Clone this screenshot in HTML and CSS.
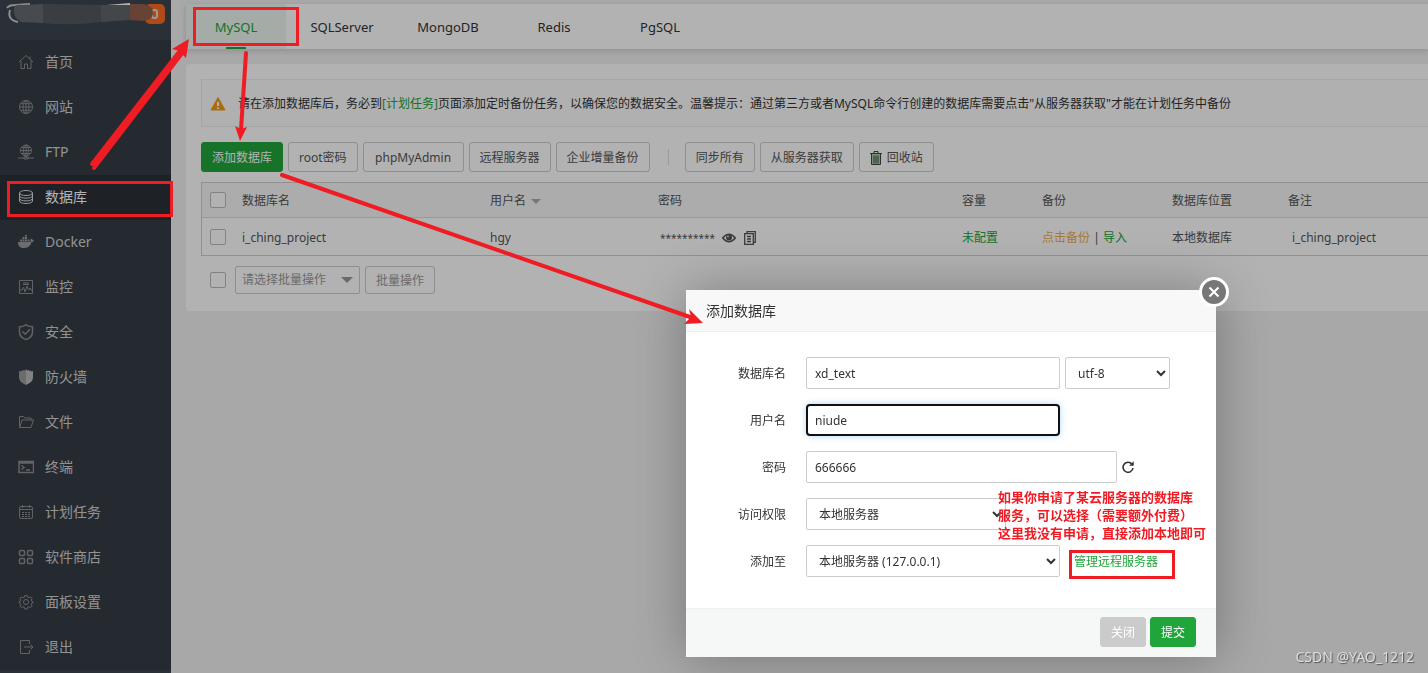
FILE: index.html
```html
<!DOCTYPE html>
<html lang="zh-CN">
<head>
<meta charset="utf-8">
<meta name="viewport" content="width=device-width, initial-scale=1">
<title>数据库</title>
<link rel="stylesheet" href="styles.css">
</head>
<body>
<div class="app">
  <aside class="sidebar">
    <div class="brand">
      <svg class="brand-art" viewBox="0 0 171 40" aria-hidden="true">
        <rect x="145" y="4" width="20" height="20" rx="5" fill="#fa6c20"/>
        <path d="M7 8Q9 5 15 5L30 4M10 10Q7 20 18 22" fill="none" stroke="#cacaca" stroke-width="2"/>
        <rect x="152" y="10" width="5" height="8" rx="2" fill="none" stroke="#ddd" stroke-width="2"/>
        <path d="M14 8Q15 4 22 5L43 4V23L21 22Q12 17 14 8Z" fill="#666a70"/>
        <path d="M43 4L101 5V22Q71 26 43 23Z" fill="#545a5f"/>
        <path d="M101 5L130 4V20L101 22Z" fill="#62666b"/>
        <path d="M130 4H144Q154 6 153 14Q152 20 143 21L130 20Z" fill="#94614c"/>
        <path d="M107 5L130 3V5Z" fill="#fff"/>
      </svg>
    </div>
    <nav class="menu">
      <a href="#"><svg viewBox="0 0 16 16"><path d="M1 8 8 1.500 15 8M3 7v7.500h3.500V10h3v4.500H13V7M12 5V2.500"/></svg>首页</a>
      <a href="#"><svg viewBox="0 0 16 16"><circle cx="8" cy="8" r="6.500"/><ellipse cx="8" cy="8" rx="3" ry="6.500"/><path d="M8 1.500v13M1.500 8h13M2.500 4.700h11M2.500 11.300h11"/></svg>网站</a>
      <a href="#"><svg viewBox="0 0 16 16"><circle cx="8" cy="6.500" r="5.500"/><ellipse cx="8" cy="6.500" rx="2.500" ry="5.500"/><path d="M8 1v13M2.500 6.500h11M3.500 3.500h9M3.500 9.500h9M0 14h6M10 14h6M6 13h4v2H6z"/></svg>FTP</a>
      <a href="#" class="active" aria-current="page"><svg viewBox="0 0 16 16"><ellipse cx="8" cy="4" rx="6.500" ry="2.500"/><path d="M1.500 4v8c0 3.300 13 3.300 13 0V4M1.500 6.700c0 3.300 13 3.300 13 0M1.500 9.400c0 3.300 13 3.300 13 0"/></svg>数据库</a>
      <a href="#"><svg viewBox="0 0 16 16"><path class="solid" d="M0 8h11.500c1.300 0 1.200-1 .8-2 .4-.7.900-1.200 1.300-1.500.8.500 1 1.200 1 1.700.6-.1 1.100 0 1.500.3-.4 1-1.300 1.500-2.500 1.500C12.500 12 10 14 6 14 2 14 0 12 0 8zM2 5.500h2v2H2zm2.500 0h2v2h-2zm2.500 0h2v2H7zm2.500 0h2v2h-2zm-5-2.500h2v2h-2zM7 3h2v2H7zM7 1h2v1.500H7z"/></svg>Docker</a>
      <a href="#"><svg viewBox="0 0 16 16"><path d="M1.500 1.500h13v13h-13zM5 4h6M5 5.500h6M2 11h2l1.500-3L7 13l2-6 1.500 4 1.500-2 1 2h1.500"/></svg>监控</a>
      <a href="#"><svg viewBox="0 0 16 16"><path class="bold" d="M8 .8Q11 2.800 14.500 2.800V8c0 4-3 6.300-6.500 7.600C4.500 14.300 1.500 12 1.500 8V2.800Q5 2.800 8 .8zM4.500 7.500 7.200 10.200 12 5.300"/></svg>安全</a>
      <a href="#"><svg viewBox="0 0 16 16"><path fill="#9b9b9b" stroke="none" d="M8 0v16C4 14 1 12.500 1 8V2l2 .5V1.500L5 2V1l2 .5z"/><path fill="#bbb" stroke="none" d="M8 0v16c4-2 7-3.500 7-8V2l-2 .5V1.500L11 2V1L9 1.500z"/></svg>防火墙</a>
      <a href="#"><svg viewBox="0 0 16 16"><path d="M1.500 13.500v-11h4L7 4h6v2M1.500 13.500 4 6h11.500L13 13.500z"/></svg>文件</a>
      <a href="#"><svg viewBox="0 0 16 16"><path class="bold" d="M1 2.500h14.500v11H1zM1 4h14.500M3.500 6.500 6 8.500 3.500 10.500M8 11h4"/></svg>终端</a>
      <a href="#"><svg viewBox="0 0 16 16"><rect x="1.500" y="2.500" width="13" height="12" rx="1.500"/><path d="M1.500 5.500h13M4.500 1v3M11.500 1v3M4 8.500h2M7 8.500h2M10 8.500h2M4 10.500h2M7 10.500h2M10 10.500h2M4 12.500h2M7 12.500h2M10 12.500h2"/></svg>计划任务</a>
      <a href="#"><svg viewBox="0 0 16 16"><g class="bold"><rect x="1.500" y="1.500" width="5" height="5" rx="1"/><rect x="9.500" y="1.500" width="5" height="5" rx="1"/><rect x="1.500" y="9.500" width="5" height="5" rx="1"/><rect x="9.500" y="9.500" width="5" height="5" rx="1"/></g></svg>软件商店</a>
      <a href="#"><svg viewBox="0 0 16 16"><circle cx="8" cy="8" r="2.500"/><path d="M6.800 1.500h2.400l.5 1.800 1.300.5 1.600-.9 1.500 1.500-.9 1.600.5 1.300 1.300.4v1l-1.300.5-.5 1.300.9 1.600-1.500 1.500-1.600-.9-1.300.5-.5 1.800H6.800l-.5-1.800-1.300-.5-1.600.9-1.500-1.500.9-1.600-.5-1.300L1 8.700v-1l1.300-.4.5-1.300-.9-1.600 1.500-1.500 1.600.9 1.300-.5z"/></svg>面板设置</a>
      <a href="#"><svg viewBox="0 0 16 16"><path d="M11.500 5V1.500h-9v13h9V11M6 8h9M12.500 5.500 15 8l-2.500 2.500"/></svg>退出</a>
    </nav>
  </aside>

  <main class="main">
    <nav class="tabs">
      <a href="#" class="active">MySQL</a>
      <a href="#">SQLServer</a>
      <a href="#">MongoDB</a>
      <a href="#">Redis</a>
      <a href="#">PgSQL</a>
    </nav>

    <section class="panel">
      <div class="notice">
        <svg viewBox="0 0 16 16" aria-hidden="true"><path d="M8 1.500 15 14H1z" fill="#f59d10" stroke="#f59d10" stroke-linejoin="round"/><path d="M8 6v4M8 11.500v1.500" stroke="#fff" stroke-width="2"/></svg>
        <p>请在添加数据库后，务必到<a href="#">[计划任务]</a>页面添加定时备份任务，以确保您的数据安全。温馨提示：通过第三方或者MySQL命令行创建的数据库需要点击"从服务器获取"才能在计划任务中备份</p>
      </div>

      <div class="toolbar">
        <button type="button" class="btn primary">添加数据库</button>
        <button type="button" class="btn">root密码</button>
        <button type="button" class="btn roomy">phpMyAdmin</button>
        <button type="button" class="btn">远程服务器</button>
        <button type="button" class="btn">企业增量备份</button>
        <span class="divider"></span>
        <button type="button" class="btn">同步所有</button>
        <button type="button" class="btn">从服务器获取</button>
        <button type="button" class="btn"><svg viewBox="0 0 12 14" aria-hidden="true"><path d="M2 3h8v10H2z" fill="#a5d3ad"/><path d="M0 2.500h12M4 2V.5h4V2M1.500 3v10.500h9V3M4 4.500v8M6 4.500v8M8 4.500v8" fill="none" stroke="#444"/></svg>回收站</button>
      </div>

      <table class="grid">
        <colgroup><col class="c-check"><col class="c-name"><col class="c-user"><col class="c-pass"><col class="c-size"><col class="c-backup"><col class="c-place"><col></colgroup>
        <thead>
          <tr><th><input type="checkbox" aria-label="全选"></th><th>数据库名</th><th>用户名<span class="sort"></span></th><th>密码</th><th>容量</th><th>备份</th><th>数据库位置</th><th>备注</th></tr>
        </thead>
        <tbody>
          <tr>
            <td><input type="checkbox" aria-label="选择 i_ching_project"></td>
            <td>i_ching_project</td>
            <td>hgy</td>
            <td><div class="secret"><span class="stars">**********</span>
              <svg class="eye" viewBox="0 0 14 10" aria-hidden="true"><path d="M.7 5Q7-2.500 13.300 5 7 12.500.7 5z" fill="none" stroke="#555" stroke-width="1.500"/><circle cx="7" cy="4.500" r="3" fill="#555"/><circle cx="6" cy="3.500" r="1" fill="#ddd"/></svg>
              <svg class="copy" viewBox="0 0 12 14" aria-hidden="true"><path d="M3 2.500V.7h8.300v10.600H9.500M.7 2.700h8.600v10.600H.7zM3 5.500h4M3 8h4M3 10.500h4" fill="none" stroke="#555" stroke-width="1.300"/></svg></div></td>
            <td><a href="#" class="green">未配置</a></td>
            <td><a href="#" class="orange">点击备份</a> | <a href="#" class="green">导入</a></td>
            <td>本地数据库</td>
            <td class="remark">i_ching_project</td>
          </tr>
        </tbody>
      </table>

      <div class="bulk">
        <input type="checkbox" aria-label="批量选择">
        <span class="bulk-select"><select aria-label="批量操作"><option>请选择批量操作</option></select></span>
        <button type="button" class="btn muted">批量操作</button>
      </div>
    </section>
  </main>
</div>

<div class="shade"></div>

<form class="modal" role="dialog" aria-labelledby="modal-title">
  <h2 id="modal-title">添加数据库</h2>
  <button type="button" class="modal-close" aria-label="关闭窗口"><svg viewBox="0 0 12 12"><path d="M1.500 1.500l9 9M10.500 1.500l-9 9" stroke="#fff" stroke-width="2"/></svg></button>
  <div class="fields">
    <div class="field"><label for="db">数据库名</label><input id="db" class="w-mid" type="text" value="xd_text"><select class="w-small" aria-label="编码"><option>utf-8</option></select></div>
    <div class="field"><label for="user">用户名</label><input id="user" class="w-mid focused" type="text" value="niude"></div>
    <div class="field"><label for="pass">密码</label><input id="pass" class="w-wide" type="text" value="666666"><button type="button" class="refresh" aria-label="随机密码"><svg viewBox="0 0 12 12"><path d="M10 3.200A5 5 0 1 0 11 7" fill="none" stroke="#333" stroke-width="1.600"/><path d="M11.700.3v4.500H7.200z" fill="#333"/></svg></button></div>
    <div class="field"><label for="access">访问权限</label><select id="access" class="w-access"><option>本地服务器</option></select></div>
    <div class="field"><label for="target">添加至</label><select id="target" class="w-mid"><option>本地服务器 (127.0.0.1)</option></select><a href="#" class="manage">管理远程服务器</a></div>
  </div>
  <div class="actions">
    <button type="button" class="btn cancel">关闭</button>
    <button type="submit" class="btn primary">提交</button>
  </div>
</form>

<svg class="marks" viewBox="0 0 1428 673" aria-hidden="true">
  <g fill="none" stroke="#ef1c24" stroke-width="3">
    <rect x="194.500" y="8.500" width="103" height="36"/>
    <rect x="8.500" y="182.500" width="163" height="33"/>
    <rect x="1070.500" y="551.500" width="103" height="26"/>
  </g>
  <g fill="none" stroke="#ef1c24" stroke-width="4" stroke-linecap="round">
    <path d="M92 164 179 52M94 168 183 52"/>
    <path d="M246 53 241 130M282 175 690 317"/>
  </g>
  <g fill="#ef1c24">
    <path d="M189 39 172 49 179 51 186 58Z"/>
    <path d="M240 141 235 126 241 129 247 127Z"/>
    <path d="M703 323 689 309 691 317 684 324Z"/>
  </g>
</svg>
<p class="remark-note">如果你申请了某云服务器的数据库<br>服务，可以选择（需要额外付费）<br>这里我没有申请，直接添加本地即可</p>
<div class="watermark">CSDN @YAO_1212</div>
</body>
</html>
```
FILE: styles.css
```css
* { box-sizing: border-box; }
body {
  margin: 0;
  min-height: 100vh;
  background: #f1f1f1;
  color: #555;
  font: 12px/18px "Noto Sans", "Noto Sans CJK SC", sans-serif;
  overflow: hidden;
}
a { color: inherit; text-decoration: none; }
p, h2 { margin: 0; }
button, input, select { font: inherit; color: inherit; margin: 0; }
svg { display: block; flex: none; }

.app { display: flex; min-height: 100vh; }
.sidebar { flex: none; width: 171px; background: #3d454f; }
.brand { height: 40px; background: #3d454f; }
.brand-art { width: 171px; height: 40px; }
.menu { background: #363d45; }
.menu a {
  display: flex;
  align-items: center;
  gap: 11px;
  height: 45px;
  padding: 0 0 2px 18px;
  color: #d2d2d2;
  font-size: 14px;
}
.menu svg { width: 16px; height: 16px; fill: none; stroke: #8c8f93; stroke-width: 1; }
.menu .bold { stroke-width: 1.5; }
.menu .solid { fill: #9a9c9f; stroke: none; }
.menu a.active { background: #2c3138; color: #fff; }
.menu a.active svg { stroke: #ddd; }

.main { flex: 1; min-width: 0; padding: 4px 0 0 15px; }
.tabs {
  display: flex;
  gap: 6px;
  height: 45px;
  background: #fff;
  box-shadow: 0 2px 6px rgba(0, 0, 0, .15);
}
.tabs a {
  display: flex;
  align-items: center;
  justify-content: center;
  position: relative;
  width: 100px;
  color: #333;
  font-size: 13px;
}
.tabs a.active { background: #edf7ef; color: #20a53a; }
.tabs a.active::after {
  content: "";
  position: absolute;
  bottom: 0;
  left: 40px;
  width: 20px;
  height: 2px;
  background: #20a53a;
}

.panel { margin-top: 15px; padding: 15px 0 17px 15px; background: #fff; border-radius: 4px 0 0 4px; }
.notice {
  display: flex;
  align-items: center;
  gap: 12px;
  height: 48px;
  padding: 2px 0 0 8px;
  border: 1px solid #eee;
  border-right: 0;
  background: #fcfcfc;
  color: #333;
  white-space: nowrap;
}
.notice svg { width: 16px; height: 16px; }
.notice a { color: #20a53a; }

.toolbar { display: flex; align-items: center; gap: 5px; margin: 15px 0 10px; }
.btn {
  display: flex;
  align-items: center;
  justify-content: center;
  gap: 5px;
  height: 30px;
  padding: 2px 10px 0;
  border: 1px solid #ccc;
  border-radius: 3px;
  background: #fff;
  color: #555;
  white-space: nowrap;
}
.btn svg { width: 12px; height: 14px; }
.btn.roomy { min-width: 101px; }
.btn.primary { background: #20a53a; border-color: #20a53a; color: #fff; }
.divider { width: 1px; height: 16px; margin: 0 11px 0 13px; background: #ddd; }

input[type="checkbox"] {
  appearance: none;
  display: block;
  flex: none;
  width: 16px;
  height: 16px;
  border: 1px solid #bbb;
  border-radius: 2px;
  background: #fff;
}
.grid { width: 100%; table-layout: fixed; border-collapse: separate; border-spacing: 0; border: 1px solid #d0d0d0; border-right: 0; }
.grid th, .grid td { padding: 2px 8px 0; text-align: left; font-weight: 400; white-space: nowrap; }
.grid th:first-child, .grid td:first-child { padding-top: 0; }
.grid th { height: 35px; background: #f7f7f7; border-bottom: 1px solid #ddd; }
.grid td { height: 37px; }
.c-check { width: 32px; }
.c-name { width: 248px; }
.c-user { width: 168px; }
.c-pass { width: 304px; }
.c-size { width: 80px; }
.c-backup { width: 130px; }
.c-place { width: 116px; }
.sort { display: inline-block; margin-left: 5px; border: 5px solid transparent; border-top-color: #aaa; border-bottom: 0; vertical-align: middle; }
.secret { display: flex; align-items: center; padding-left: 2px; }
.stars { width: 56px; margin-right: 6px; font-size: 10px; }
.eye { width: 14px; height: 10px; margin-right: 8px; }
.copy { width: 12px; height: 14px; }
.green { color: #20a53a; }
.orange { color: #f0ad4e; }
.grid td.remark { padding-left: 12px; }

.bulk { display: flex; align-items: center; gap: 5px; margin-top: 10px; padding-left: 9px; color: #999; }
.bulk-select { position: relative; margin-left: 4px; }
.bulk-select select { appearance: none; display: block; width: 125px; height: 28px; padding: 0 6px; border: 1px solid #ccc; border-radius: 2px; background: #fff; }
.bulk-select::after { content: ""; position: absolute; right: 7px; top: 11px; border: 6px solid transparent; border-top-color: #999; border-bottom: 0; pointer-events: none; }
.btn.muted { height: 28px; color: #999; }

.shade { position: fixed; inset: 0; background: rgba(0, 0, 0, .3); }

.modal {
  position: absolute;
  left: 686px;
  top: 290px;
  width: 530px;
  background: #fff;
  color: #333;
  box-shadow: 1px 1px 50px rgba(0, 0, 0, .3);
}
.modal h2 { padding: 0 20px; border-bottom: 1px solid #eee; background: #f8f8f8; font-size: 14px; line-height: 41px; font-weight: 400; }
.modal-close {
  position: absolute;
  top: -13px;
  right: -13px;
  display: flex;
  align-items: center;
  justify-content: center;
  width: 30px;
  height: 30px;
  padding: 0;
  border: 3px solid #fff;
  border-radius: 50%;
  background: #777;
}
.modal-close svg { width: 12px; height: 12px; }
.fields { display: grid; gap: 15px; padding: 25px 20px 31px 0; }
.field { display: flex; align-items: center; gap: 5px; }
.field label { width: 100px; margin-right: 15px; padding-top: 2px; text-align: right; }
.field input, .field select { height: 32px; border: 1px solid #ccc; border-radius: 2px; background: #fff; padding: 0 8px; }
.w-mid { width: 254px; }
.w-small { width: 105px; }
.w-wide { width: 311px; }
.w-access { width: 200px; }
.field .focused { border: 2px solid #101010; border-radius: 4px; padding: 0 7px; box-shadow: 0 0 6px rgba(102, 175, 233, .5); }
.refresh { padding: 0; border: 0; background: none; }
.refresh svg { width: 12px; height: 12px; }
.manage { margin-left: 9px; padding-top: 2px; color: #20a53a; }
.actions { display: flex; justify-content: flex-end; gap: 4px; padding: 8px 20px 10px; border-top: 1px solid #edf1f2; background: #f6f8f8; }
.btn.cancel { border-color: #cbcbcb; background: #cbcbcb; color: #fff; }

.marks { position: absolute; left: 0; top: 0; width: 1428px; height: 673px; pointer-events: none; }
.remark-note { position: absolute; left: 998px; top: 488px; color: #ef1c24; font-family: "Noto Sans CJK SC", sans-serif; font-size: 13px; font-weight: 700; line-height: 18px; white-space: nowrap; }
.watermark { position: fixed; right: 14px; bottom: 7px; color: #ddd; font-size: 14px; text-shadow: 1px 1px 1px #555; }
```
